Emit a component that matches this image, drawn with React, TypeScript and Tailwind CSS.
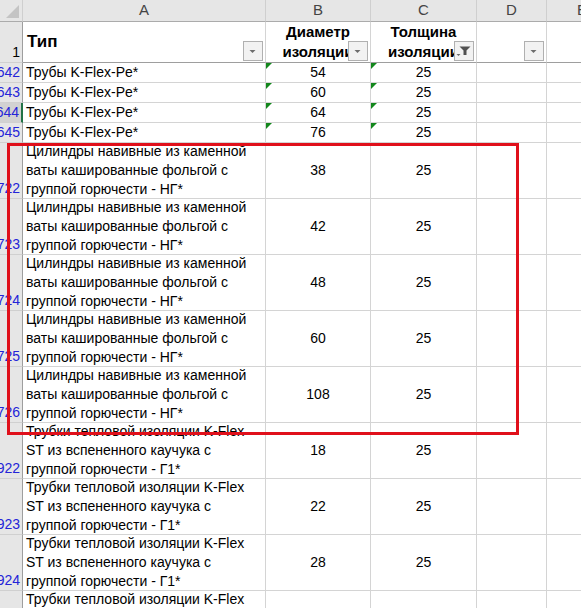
import React from "react";

const shortRows = [
    { n: "642", a: "Трубы K-Flex-Pe*", b: "54", c: "25" },
    { n: "643", a: "Трубы K-Flex-Pe*", b: "60", c: "25" },
    { n: "644", a: "Трубы K-Flex-Pe*", b: "64", c: "25", active: true },
    { n: "645", a: "Трубы K-Flex-Pe*", b: "76", c: "25" },
];

const cyl = ["Цилиндры навивные из каменной", "ваты кашированные фольгой с", "группой горючести - НГ*"];
const kflex = ["Трубки тепловой изоляции K-Flex", "ST из вспененного каучука с", "группой горючести - Г1*"];

const tallRows = [
    { n: "722", a: cyl, b: "38", c: "25" },
    { n: "723", a: cyl, b: "42", c: "25" },
    { n: "724", a: cyl, b: "48", c: "25" },
    { n: "725", a: cyl, b: "60", c: "25" },
    { n: "726", a: cyl, b: "108", c: "25" },
    { n: "922", a: kflex, b: "18", c: "25" },
    { n: "923", a: kflex, b: "22", c: "25" },
    { n: "924", a: kflex, b: "28", c: "25" },
    { n: "925", a: kflex, b: "35", c: "25" },
];

const FilterBtn = ({ active }: { active?: boolean }) => (
    <div className="absolute right-[2px] bottom-[1px] w-[20px] h-[20px] border border-[#b0b0b0] bg-[#f2f2f2]">
        {active ? (
            <svg width="18" height="18" viewBox="0 0 18 18" className="block">
                <polygon points="1.5,12 5.5,12 3.5,14" fill="#6a6a6a" />
                <polygon points="4.5,4.5 15.5,4.5 11.5,8.5 11.5,13 8.5,13 8.5,8.5" fill="#505050" />
            </svg>
        ) : (
            <svg width="18" height="18" viewBox="0 0 18 18" className="block">
                <polygon points="5.5,8 11.5,8 8.5,11" fill="#6d6d6d" />
            </svg>
        )}
    </div>
);

const GreenTri = () => (
    <svg width="6" height="6" viewBox="0 0 6 6" className="absolute top-0 left-0">
        <polygon points="0,0 6,0 0,6" fill="#13871c" />
    </svg>
);

const RowNum = ({ n, h, active, black }: { n: string; h: string; active?: boolean; black?: boolean }) => (
    <div
        className={`${h} w-[23px] shrink-0 flex items-end justify-end overflow-hidden pr-[2px] leading-[18.7px] border-b border-b-[#d0d0d0] ${
            active ? "bg-[#d2d2d2] border-r-2 border-r-[#217346]" : "bg-[#e6e6e6] border-r border-r-[#9e9e9e]"
        } ${black ? "text-black" : "text-[#2424d8]"}`}
    >
        <span className="whitespace-nowrap">{n}</span>
    </div>
);

export default function App() {
    return (
        <div className="relative w-[581px] h-[608px] overflow-hidden bg-white text-[14px] text-black font-['Liberation_Sans',Arial,sans-serif]">
            {/* заголовки столбцов */}
            <div className="flex h-[22px] bg-[#e6e6e6] text-[#444] text-[15px]">
                <div className="w-[23px] shrink-0 border-r border-r-[#cfcfcf] border-b border-b-[#ababab] relative">
                    <svg width="13" height="13" viewBox="0 0 13 13" className="absolute right-[3px] bottom-[3px]">
                        <polygon points="13,0 13,13 0,13" fill="#c4c4c4" />
                    </svg>
                </div>
                <div className="w-[243px] shrink-0 flex items-center justify-center border-r border-r-[#cfcfcf] border-b border-b-[#ababab]">A</div>
                <div className="w-[105px] shrink-0 flex items-center justify-center border-r border-r-[#cfcfcf] border-b border-b-[#ababab]">B</div>
                <div className="w-[106px] shrink-0 flex items-center justify-center border-r border-r-[#cfcfcf] border-b border-b-[#ababab]">C</div>
                <div className="w-[70px] shrink-0 flex items-center justify-center border-r border-r-[#cfcfcf] border-b border-b-[#ababab]">D</div>
                <div className="w-[70px] shrink-0 flex items-center justify-center border-b border-b-[#ababab]">E</div>
            </div>

            {/* строка 1 — шапка таблицы */}
            <div className="flex h-[41px]">
                <RowNum n="1" h="h-[41px]" black />
                <div className="relative w-[243px] shrink-0 flex items-center pl-[4px] text-[17px] font-bold border-r border-[#d4d4d4] border-b border-b-[#9e9e9e]">
                    Тип
                    <FilterBtn />
                </div>
                <div className="relative w-[105px] shrink-0 flex flex-col items-center justify-center text-[15px] font-bold leading-[20px] border-r border-[#d4d4d4] border-b border-b-[#9e9e9e] overflow-hidden">
                    <span className="whitespace-nowrap">Диаметр</span>
                    <span className="whitespace-nowrap">изоляции</span>
                    <FilterBtn />
                </div>
                <div className="relative w-[106px] shrink-0 flex flex-col items-center justify-center text-[15px] font-bold leading-[20px] border-r border-[#d4d4d4] border-b border-b-[#9e9e9e] overflow-hidden">
                    <span className="whitespace-nowrap">Толщина</span>
                    <span className="whitespace-nowrap">изоляции</span>
                    <FilterBtn active />
                </div>
                <div className="relative w-[70px] shrink-0 border-r border-[#d4d4d4] border-b border-b-[#9e9e9e]">
                    <FilterBtn />
                </div>
                <div className="w-[70px] shrink-0 border-b border-b-[#9e9e9e]" />
            </div>

            {shortRows.map((r) => (
                <div key={r.n} className="flex h-[20px] leading-[18.7px]">
                    <RowNum n={r.n} h="h-[20px]" active={r.active} />
                    <div className="w-[243px] shrink-0 flex items-center pl-[3px] whitespace-nowrap border-r border-b border-[#d4d4d4]">{r.a}</div>
                    <div className="relative w-[105px] shrink-0 flex items-center justify-center border-r border-b border-[#d4d4d4]">
                        <GreenTri />
                        {r.b}
                    </div>
                    <div className="relative w-[106px] shrink-0 flex items-center justify-center border-r border-b border-[#d4d4d4]">
                        <GreenTri />
                        {r.c}
                    </div>
                    <div className="w-[70px] shrink-0 border-r border-b border-[#d4d4d4]" />
                    <div className="w-[70px] shrink-0 border-r border-b border-[#d4d4d4]" />
                </div>
            ))}

            {tallRows.map((r) => (
                <div key={r.n} className="flex h-[56px] shrink-0 leading-[18.7px]">
                    <RowNum n={r.n} h="h-[56px]" />
                    <div className="w-[243px] shrink-0 flex flex-col justify-center pl-[3px] whitespace-nowrap border-r border-b border-[#d4d4d4]">
                        {r.a.map((l, i) => (
                            <span key={i}>{l}</span>
                        ))}
                    </div>
                    <div className="w-[105px] shrink-0 flex items-center justify-center border-r border-b border-[#d4d4d4]">{r.b}</div>
                    <div className="w-[106px] shrink-0 flex items-center justify-center border-r border-b border-[#d4d4d4]">{r.c}</div>
                    <div className="w-[70px] shrink-0 border-r border-b border-[#d4d4d4]" />
                    <div className="w-[70px] shrink-0 border-r border-b border-[#d4d4d4]" />
                </div>
            ))}

            {/* красная рамка выделения */}
            <div className="absolute left-[7px] top-[143px] w-[512px] h-[292px] border-[3px] border-[#e0101b] pointer-events-none" />
        </div>
    );
}
